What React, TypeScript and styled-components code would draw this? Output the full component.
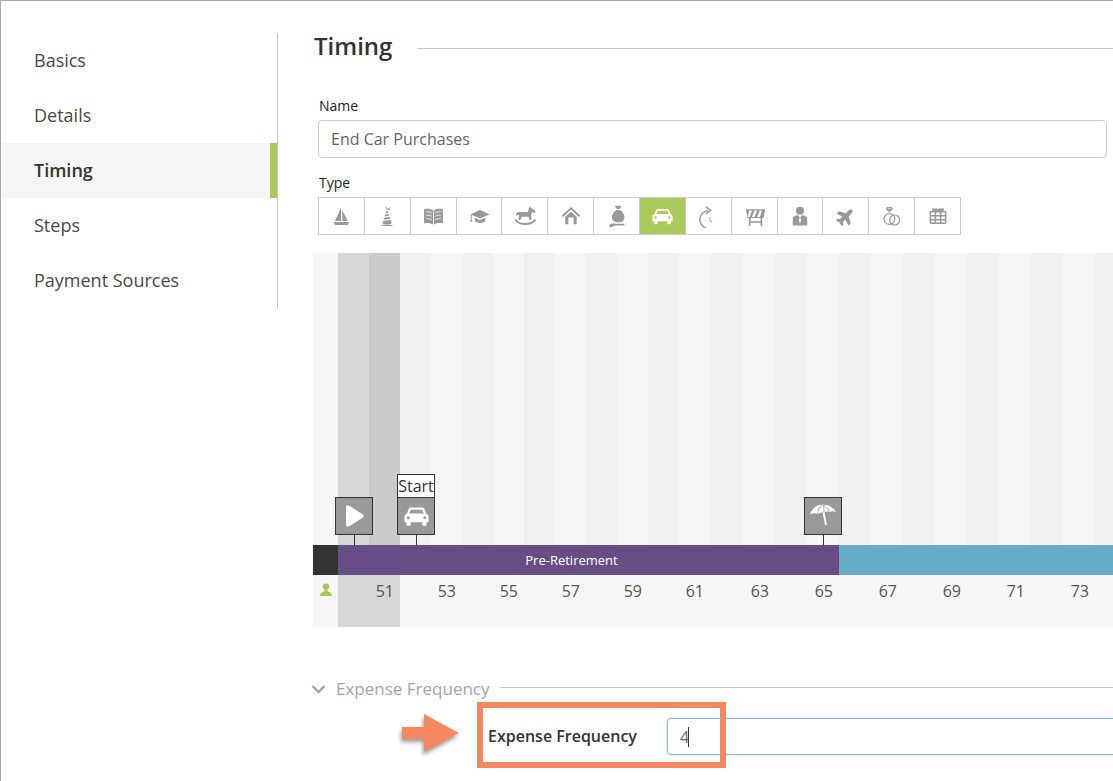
import React from "react";
import styled, { createGlobalStyle } from "styled-components";
import { FaPlane } from "react-icons/fa";

const Global = createGlobalStyle`
  html, body { margin: 0; padding: 0; background: #fff; }
  body { font-family: "Open Sans", "Liberation Sans", sans-serif; color: #333; }
  * { box-sizing: border-box; }
`;

const Page = styled.div`
  position: relative;
  width: 1113px;
  height: 781px;
  overflow: hidden;
  display: flex;
  align-items: flex-start;
  border-top: 1px solid #a9a9a9;
  border-left: 1px solid #a9a9a9;
`;

const Sidebar = styled.nav`
  flex: 0 0 277px;
  height: 275px;
  margin-top: 32px;
  border-right: 1px solid #c8c8c8;
`;

const NavItem = styled.div<{ $active?: boolean }>`
  height: 55px;
  display: flex;
  align-items: center;
  padding: 0 0 2px 33px;
  font-size: 18px;
  font-weight: ${(p) => (p.$active ? 600 : 400)};
  color: ${(p) => (p.$active ? "#333" : "#4a4a4a")};
  background: ${(p) => (p.$active ? "#f6f6f6" : "transparent")};
  border-right: 7px solid ${(p) => (p.$active ? "#a9c95b" : "transparent")};
`;

const Main = styled.main`
  flex: 1;
  min-width: 0;
  padding: 32px 0 0 35px;
`;

const HeadingRow = styled.div`
  height: 28px;
  display: flex;
  align-items: center;
  gap: 25px;
`;

const Heading = styled.h1`
  margin: -2px 0 0 1px;
  font-size: 24px;
  line-height: 28px;
  font-weight: 600;
  color: #333;
`;

const Rule = styled.div`
  flex: 1;
  height: 1px;
  margin-top: 2px;
  background: #c8c8c8;
`;

const Field = styled.div`
  margin: 0 6px 0 5px;
`;

const FieldLabel = styled.label<{ $top: number }>`
  display: block;
  margin-top: ${(p) => p.$top}px;
  padding-left: 1px;
  font-size: 14px;
  line-height: 16px;
  font-weight: 500;
  color: #222;
`;

const NameInput = styled.input`
  display: block;
  width: 100%;
  height: 38px;
  margin-top: 6px;
  padding: 0 12px;
  border: 1px solid #ccc;
  border-radius: 4px;
  outline: none;
  font: 400 16px "Open Sans", sans-serif;
  color: #666;
`;

const TypeBar = styled.div`
  display: flex;
  width: 643px;
  height: 38px;
  margin-top: 6px;
  border: 1px solid #ccc;
`;

const TypeButton = styled.div<{ $active?: boolean }>`
  flex: 1;
  display: flex;
  align-items: center;
  justify-content: center;
  background: ${(p) => (p.$active ? "#a9c95b" : "#fff")};
  color: ${(p) => (p.$active ? "#fff" : "#999")};
  & + & { border-left: 1px solid #ccc; }
`;

const Chart = styled.section`
  margin-top: 18px;
  width: 800px;
`;

const Stripes = styled.div`
  position: relative;
  display: flex;
  height: 292px;
  background: #f7f7f7;
`;

const Stripe = styled.div<{ $w: number; $c: string }>`
  flex: 0 0 ${(p) => p.$w}px;
  background: ${(p) => p.$c};
`;

const Marker = styled.div<{ $left: number }>`
  position: absolute;
  left: ${(p) => p.$left}px;
  bottom: 0;
  width: 38px;
  display: flex;
  flex-direction: column;
  align-items: center;
`;

const MarkerLabel = styled.div`
  width: 38px;
  height: 24px;
  margin-bottom: -1px;
  background: #fff;
  border: 1px solid #333;
  font-size: 16px;
  line-height: 22px;
  text-align: center;
  color: #333;
  white-space: nowrap;
`;

const MarkerBox = styled.div`
  width: 38px;
  height: 38px;
  background: #999;
  border: 1px solid #333;
  display: flex;
  align-items: center;
  justify-content: center;
  color: #fff;
`;

const Stem = styled.div`
  width: 1px;
  height: 10px;
  background: #333;
`;

const Band = styled.div`
  display: flex;
  height: 30px;
`;

const BandPart = styled.div<{ $w?: number; $c: string }>`
  ${(p) => (p.$w ? `flex: 0 0 ${p.$w}px;` : "flex: 1;")}
  background: ${(p) => p.$c};
  display: flex;
  align-items: center;
  justify-content: center;
`;

const BandLabel = styled.span`
  margin: -1px 34px 0 0;
  color: #fff;
  font-size: 13px;
`;

const Ages = styled.div`
  display: flex;
  height: 52px;
  background: #f7f7f7;
`;

const PersonCell = styled.div`
  flex: 0 0 25px;
  padding: 8px 0 0 7px;
  color: #a9c95b;
`;

const AgeCell = styled.div<{ $w: number; $hl?: boolean }>`
  flex: 0 0 ${(p) => p.$w}px;
  padding: 5px 6px 0 0;
  text-align: right;
  font-size: 16px;
  line-height: 22px;
  color: #555;
  background: ${(p) => (p.$hl ? "#d7d7d7" : "transparent")};
`;

const SectionHeader = styled.div`
  height: 24px;
  margin-top: 50px;
  display: flex;
  align-items: center;
  color: #a5a5a5;
  font-size: 17px;
`;

const SectionTitle = styled.span`
  margin: -2px 0 0 10px;
  white-space: nowrap;
`;

const SectionRule = styled.div`
  flex: 1;
  height: 1px;
  margin: -4px 0 0 10px;
  background: #c8c8c8;
`;

const FreqRow = styled.div`
  display: flex;
  align-items: center;
  height: 37px;
  margin: 17px 0 0 175px;
`;

const FreqLabel = styled.div`
  flex: 0 0 179px;
  margin-top: -2px;
  font-size: 16px;
  font-weight: 600;
  color: #333;
  white-space: nowrap;
`;

const FreqInput = styled.div`
  flex: 0 0 600px;
  height: 37px;
  padding-left: 12px;
  display: flex;
  align-items: center;
  border: 1px solid #8fb8ea;
  border-radius: 4px;
  box-shadow: 0 0 2px rgba(100, 160, 230, 0.6);
  font-size: 16px;
  color: #666;
`;

const Caret = styled.span`
  display: inline-block;
  width: 1px;
  height: 20px;
  margin-left: -1px;
  background: #333;
`;

const CalloutBox = styled.div`
  position: absolute;
  left: 476px;
  top: 701px;
  width: 249px;
  height: 66px;
  border: 6px solid #f58860;
  pointer-events: none;
`;

const CalloutArrow = styled.svg`
  position: absolute;
  left: 398px;
  top: 710px;
  filter: drop-shadow(-1px 3px 2px rgba(0, 0, 0, 0.4));
`;

const G = "currentColor";

const Svg = ({ size = 20, children }: { size?: number; children: React.ReactNode }) => (
  <svg width={size} height={size} viewBox="0 0 20 20" fill={G}>
    {children}
  </svg>
);

const Boat = () => (
  <Svg size={21}>
    <path d="M9.6 1.5V14.2H3.8Z" />
    <path d="M10.8 4.5 16 14.2H10.8Z" />
    <path d="M2.6 15.2H17.4L16 18H4Z" />
  </Svg>
);
const Party = () => (
  <Svg size={22}>
    <path d="M10 4 14.4 16.5C12 18 8 18 5.8 16.5Z" />
    <path d="M8.6 8.2 11.8 7.6M7.4 11 13.4 10M6.2 14 14.6 13" stroke="#fff" strokeWidth="1" fill="none" />
    <path d="M10 4 9 1.5M10 4 13 2.5M10 4 13 4.5" stroke={G} strokeWidth=".8" fill="none" />
    <path d="M5 18H15V19H5Z" />
  </Svg>
);
const Book = () => (
  <Svg size={23}>
    <path d="M10 5C8 3.2 4.5 3 1.8 3.6V16C4.5 15.4 8 15.6 10 17.2 12 15.6 15.5 15.4 18.2 16V3.6C15.5 3 12 3.2 10 5Z" />
    <path d="M10 5V17M3.6 6C5.3 5.8 7 6 8.6 6.8M3.6 9C5.3 8.8 7 9 8.6 9.8M3.6 12C5.3 11.8 7 12 8.6 12.8M16.4 6C14.7 5.8 13 6 11.4 6.8M16.4 9C14.7 8.8 13 9 11.4 9.8M16.4 12C14.7 11.8 13 12 11.4 12.8" stroke="#fff" strokeWidth=".7" fill="none" />
  </Svg>
);
const Cap = () => (
  <Svg size={21}>
    <path d="M10.5 3.5 19.5 8 10.5 12 1.5 8Z" />
    <path d="M5.5 11.2V14.5C8 16.6 13 16.6 15.5 14.5V11.2L10.5 13.4Z" />
    <path d="M2.2 8.5V13" stroke={G} strokeWidth="1" fill="none" />
    <circle cx="2.2" cy="14" r="1" />
  </Svg>
);
const Horse = () => (
  <Svg size={26}>
    <path d="M13.5 2.5 15 4 17.5 5.5 18.2 7.4 16.4 7.6 15.4 6.8 14.8 9.8 14.8 13H13.4L12.6 10.6H7.6L6.4 13H5L5.6 9.6C4.8 9 4 9.2 3.2 9.8 3 8.4 3.6 7 5.2 7H12.2C12.8 5.4 12.8 4 13.5 2.5Z" />
    <path d="M2.5 12.6C5 17 14.5 17.6 18 12.8" stroke={G} strokeWidth="1.5" fill="none" />
  </Svg>
);
const House = () => (
  <Svg size={22}>
    <path d="M2.2 10.2 10 3 17.8 10.2" stroke={G} strokeWidth="1.7" fill="none" />
    <path d="M4.8 10.6 10 5.8 15.2 10.6V17.5H12.4V11.4H7.6V17.5H4.8Z" />
  </Svg>
);
const Bag = () => (
  <Svg size={24}>
    <path d="M8.2 1.5H13.8L12.4 4.2H9.6Z" />
    <path d="M9.6 5H12.4C15 6.5 16.4 9 16.2 11.5 16 14 14 15.4 11 15.4 8 15.4 6 14 5.8 11.5 5.6 9 7 6.5 9.6 5Z" />
    <path d="M3.5 17.5C5 16.5 7 16.2 9 16.4H15.5C16.5 16.4 16.5 17.8 15.5 18H10.5C8.5 18 6.5 18.5 4.5 19.8Z" />
  </Svg>
);
const Car = ({ size = 21 }: { size?: number }) => (
  <Svg size={size}>
    <path
      fillRule="evenodd"
      d="M5.6 2.8H14.4C15.4 2.8 16 3.4 16.4 4.2L17.6 7.6C18.8 8 19.6 9 19.6 10.2V14.6H18V16.4C18 17 17.6 17.4 17 17.4H15.6C15 17.4 14.6 17 14.6 16.4V14.6H5.4V16.4C5.4 17 5 17.4 4.4 17.4H3C2.4 17.4 2 17 2 16.4V14.6H.4V10.2C.4 9 1.2 8 2.4 7.6L3.6 4.2C4 3.4 4.6 2.8 5.6 2.8ZM6 4.6C5.5 4.6 5.2 4.8 5 5.3L4.2 7.6H15.8L15 5.3C14.8 4.8 14.5 4.6 14 4.6ZM3.4 9.8A1.2 1.2 0 1 0 3.4 12.2 1.2 1.2 0 1 0 3.4 9.8ZM16.6 9.8A1.2 1.2 0 1 0 16.6 12.2 1.2 1.2 0 1 0 16.6 9.8Z"
    />
  </Svg>
);
const ClockBack = () => (
  <Svg size={24}>
    <g transform="translate(-2.4 0)">
      <path d="M12.5 5.4C8 6 5.4 9.4 5.6 13.2 5.8 17 8.6 20.4 13.5 21" stroke={G} strokeWidth="1.2" fill="none" />
      <path d="M10.6 2.4 14.6 5.2 10.6 8.4" stroke={G} strokeWidth="1.2" fill="none" />
      <path d="M14 11V14L16 15" stroke={G} strokeWidth=".8" fill="none" />
    </g>
  </Svg>
);
const Barrier = () => (
  <Svg size={21}>
    <path fillRule="evenodd" d="M1.8 3H20.2L18.6 11.5H3.4ZM5 4.2 3.8 10.4H5.4L7.6 4.2ZM10 4.2 7.6 10.4H10L12.4 4.2ZM15 4.2 12.6 10.4H15L17.2 4.2Z" />
    <path d="M4.6 11.5H6.2V19H4.6ZM15.8 11.5H17.4V19H15.8ZM6 14.6H16V16H6Z" />
  </Svg>
);
const Suit = () => (
  <Svg size={22}>
    <circle cx="10" cy="5.2" r="3.7" />
    <path d="M3.4 18.6V12.6C3.4 11 4.6 10 6.4 9.6L8.6 9.4 10 12 11.4 9.4 13.6 9.6C15.4 10 16.6 11 16.6 12.6V18.6Z" />
    <path d="M10 11.5 9 13 10 17.6 11 13Z" fill="#fff" />
  </Svg>
);
const Rings = () => (
  <Svg size={20}>
    <circle cx="7.4" cy="13" r="5.4" stroke={G} strokeWidth="1.2" fill="none" />
    <circle cx="12.6" cy="14" r="5" stroke={G} strokeWidth="1.2" fill="none" />
    <path d="M5 1H9.6L11 3 7.4 6.4 3.8 3Z" />
    <path d="M5.6 2.6H9" stroke="#fff" strokeWidth=".6" />
  </Svg>
);
const Grid = () => (
  <Svg size={20}>
    <path
      fillRule="evenodd"
      d="M4.2 2.6C5 2 6 2 6.6 2.8 7.2 2 8.8 2 9.4 2.8L10 3.4 10.6 2.8C11.2 2 12.8 2 13.4 2.8 14 2 15 2 15.8 2.6V5H17.6C18 5 18.4 5.4 18.4 5.8V16.6C18.4 17.4 17.8 18 17 18H3C2.2 18 1.6 17.4 1.6 16.6V5.8C1.6 5.4 2 5 2.4 5H4.2ZM3.2 6.6V9H6.6V6.6ZM8.2 6.6V9H11.8V6.6ZM13.4 6.6V9H16.8V6.6ZM3.2 10.4V13H6.6V10.4ZM8.2 10.4V13H11.8V10.4ZM13.4 10.4V13H16.8V10.4ZM3.2 14.4V16.6H6.6V14.4ZM8.2 14.4V16.6H11.8V14.4ZM13.4 14.4V16.6H16.8V14.4Z"
    />
  </Svg>
);
const Plane = () => <FaPlane size={19} style={{ transform: "rotate(-45deg)" }} />;

const Play = () => (
  <svg width="22" height="24" viewBox="0 0 22 24" fill="#fff">
    <path d="M3 3.4C3 1.6 4.8.8 6.2 1.7L19.6 10.2C21 11.1 21 12.9 19.6 13.8L6.2 22.3C4.8 23.2 3 22.4 3 20.6Z" />
  </svg>
);
const Umbrella = () => (
  <svg width="28" height="28" viewBox="0 0 28 28" fill="#fff">
    <path d="M1 12.5C3 6 8.5 2.5 13.5 2.8 18.5 2.5 24 5 27 9.8 24.6 8.8 22.4 9 20.6 10 18.8 9 16.6 9.4 15 10.8 13 10 10.6 10.4 9 12 7 10.8 3.8 11 1 12.5Z" />
    <path d="M8.6 11.6C9 8 10.4 5 13 3M14.8 10.6C15.2 8 15 5 14 3M20.4 9.8C19.6 7.4 17.4 4.8 14.6 3" stroke="#999" strokeWidth=".9" fill="none" />
    <path d="M14.6 10.5 17 23" stroke="#fff" strokeWidth="1.8" fill="none" />
  </svg>
);
const Person = () => (
  <svg width="12" height="14" viewBox="0 0 12 14" fill="currentColor" style={{ display: "block" }}>
    <circle cx="6" cy="3.6" r="3.2" />
    <path d="M4.4 6.6H7.6V8.2C9.6 8.8 11.6 9.6 11.8 11.6V13H.2V11.6C.4 9.6 2.4 8.8 4.4 8.2Z" />
  </svg>
);
const Chevron = () => (
  <svg width="15" height="10" viewBox="0 0 15 10" fill="none" stroke="#a5a5a5" strokeWidth="2.4" style={{ marginLeft: -2 }}>
    <path d="M1.5 2 7.5 8 13.5 2" />
  </svg>
);

const navItems = ["Basics", "Details", "Timing", "Steps", "Payment Sources"];
const typeIcons = [Boat, Party, Book, Cap, Horse, House, Bag, Car, ClockBack, Barrier, Suit, Plane, Rings, Grid];

const stripeWidths = [25, 31, 31, 31, 31, 31, 31, 31, 31, 31, 31, 31, 32, 32, 32, 32, 32, 32, 32, 32, 32, 32, 32, 32, 32, 32, 32];
const stripeColor = (i: number) => {
  if (i === 0) return "#f7f7f7";
  if (i === 1) return "#d7d7d7";
  if (i === 2) return "#cbcbcb";
  return i % 2 === 1 ? "#f1f1f1" : "#f6f6f6";
};

const ages: [string, number][] = [
  ["51", 62], ["53", 62], ["55", 62], ["57", 62], ["59", 62], ["61", 62],
  ["63", 65], ["65", 64], ["67", 64], ["69", 64], ["71", 64], ["73", 64], ["", 39],
];

export default function App() {
  return (
    <>
      <Global />
      <Page>
        <Sidebar>
          {navItems.map((n) => (
            <NavItem key={n} $active={n === "Timing"}>{n}</NavItem>
          ))}
        </Sidebar>
        <Main>
          <HeadingRow>
            <Heading>Timing</Heading>
            <Rule />
          </HeadingRow>
          <Field>
            <FieldLabel $top={37}>Name</FieldLabel>
            <NameInput readOnly value="End Car Purchases" />
            <FieldLabel $top={17}>Type</FieldLabel>
            <TypeBar>
              {typeIcons.map((Icon, i) => (
                <TypeButton key={i} $active={i === 7}>
                  <Icon />
                </TypeButton>
              ))}
            </TypeBar>
          </Field>
          <Chart>
            <Stripes>
              {stripeWidths.map((w, i) => (
                <Stripe key={i} $w={w} $c={stripeColor(i)} />
              ))}
              <Marker $left={22}>
                <MarkerBox><Play /></MarkerBox>
                <Stem />
              </Marker>
              <Marker $left={84}>
                <MarkerLabel>Start</MarkerLabel>
                <MarkerBox><Car size={25} /></MarkerBox>
                <Stem />
              </Marker>
              <Marker $left={491}>
                <MarkerBox><Umbrella /></MarkerBox>
                <Stem />
              </Marker>
            </Stripes>
            <Band>
              <BandPart $w={25} $c="#333333" />
              <BandPart $w={501} $c="#674f86"><BandLabel>Pre-Retirement</BandLabel></BandPart>
              <BandPart $c="#68adc8" />
            </Band>
            <Ages>
              <PersonCell><Person /></PersonCell>
              {ages.map(([a, w], i) => (
                <AgeCell key={i} $w={w} $hl={i === 0}>{a}</AgeCell>
              ))}
            </Ages>
          </Chart>
          <SectionHeader>
            <Chevron />
            <SectionTitle>Expense Frequency</SectionTitle>
            <SectionRule />
          </SectionHeader>
          <FreqRow>
            <FreqLabel>Expense Frequency</FreqLabel>
            <FreqInput>4<Caret /></FreqInput>
          </FreqRow>
        </Main>
        <CalloutBox />
        <CalloutArrow width="66" height="50" viewBox="0 0 66 50">
          <path d="M3 16H25V3L60 22 25 41V28H3Z" fill="#f58860" />
        </CalloutArrow>
      </Page>
    </>
  );
}
